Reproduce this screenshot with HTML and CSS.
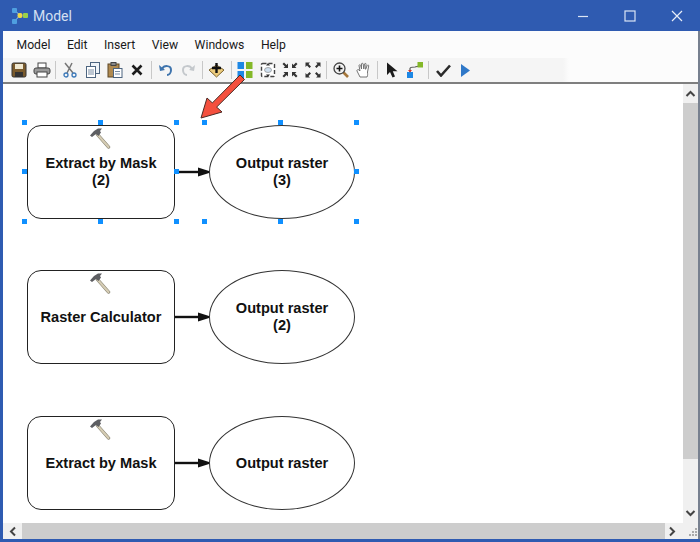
FILE: index.html
```html
<!DOCTYPE html>
<html lang="en">
<head>
  <meta charset="UTF-8" />
  <title>Model</title>
  <link rel="stylesheet" href="styles.css">
</head>
<body>
  <svg width="0" height="0" class="defs">
    <symbol id="hammer" viewBox="0 0 22 22">
      <path d="M8.5 7.5 L19.5 20" stroke="#85806f" stroke-width="3.4" stroke-linecap="round"/>
      <path d="M8.5 7.5 L19.5 20" stroke="#d5ccb4" stroke-width="2.2" stroke-linecap="round"/>
      <path d="M1 8.5 L5 4 L9 1.5 L13 1.5 L11 4 L12 5.5 L9.5 9 L7 7 L3 10 Z" fill="#5d5e62"/>
    </symbol>
    <symbol id="linkhead" viewBox="0 0 34 12">
      <path d="M0 6 H24" stroke="#111" stroke-width="2.4"/>
      <path d="M23 1.5 L34 5 V7 L23 10.5 Z" fill="#111"/>
    </symbol>
  </svg>

  <div class="window">
    <div class="titlebar">
      <svg class="app-icon" width="16" height="18" viewBox="0 0 16 18">
        <path d="M3 4 L8 8 M3 14 L8 8" stroke="#9cc3e6" stroke-width="1"/>
        <rect x="0" y="1" width="5" height="5" rx="1" fill="#4f9fe0"/>
        <rect x="0" y="12" width="5" height="5" rx="1" fill="#4f9fe0"/>
        <rect x="5.5" y="6" width="5" height="5" rx="2" fill="#f0d848"/>
        <rect x="11" y="6" width="5" height="5" rx="1" fill="#9bd04a"/>
      </svg>
      <span class="title">Model</span>
      <div class="win-buttons">
        <svg width="12" height="12" viewBox="0 0 12 12"><path d="M1 6.5 H11" stroke="#dbe5f5" stroke-width="1.2"/></svg>
        <svg width="12" height="12" viewBox="0 0 12 12"><rect x="1" y="1" width="10" height="10" fill="none" stroke="#dbe5f5" stroke-width="1.2"/></svg>
        <svg width="12" height="12" viewBox="0 0 12 12"><path d="M1 1 L11 11 M11 1 L1 11" stroke="#e8eef8" stroke-width="1.2"/></svg>
      </div>
    </div>

    <div class="menubar">
      <span>Model</span>
      <span>Edit</span>
      <span>Insert</span>
      <span>View</span>
      <span>Windows</span>
      <span>Help</span>
    </div>

    <div class="toolbar">
      <!-- save -->
      <div class="tool"><svg width="16" height="16" viewBox="0 0 16 16"><rect x="1" y="1" width="14" height="14" rx="1.5" fill="#7a5a2c" stroke="#333"/><rect x="4" y="2" width="8" height="5" fill="#f0e8d0"/><rect x="4" y="10" width="8" height="5" fill="#333"/></svg></div>
      <!-- print -->
      <div class="tool"><svg width="18" height="16" viewBox="0 0 18 16"><rect x="5" y="1" width="8" height="5" fill="#fff" stroke="#444"/><rect x="1" y="6" width="16" height="6" rx="2" fill="#9a9a9a" stroke="#444"/><rect x="4" y="10" width="10" height="5" fill="#fff" stroke="#444"/></svg></div>
      <div class="sep"></div>
      <!-- cut -->
      <div class="tool"><svg width="16" height="16" viewBox="0 0 16 16"><path d="M3 1 L11 11 M10 1 L5 11" stroke="#777" stroke-width="1.5"/><circle cx="4" cy="13" r="2" fill="none" stroke="#3b78b8" stroke-width="1.3"/><circle cx="12" cy="13" r="2" fill="none" stroke="#3b78b8" stroke-width="1.3"/></svg></div>
      <!-- copy -->
      <div class="tool"><svg width="16" height="16" viewBox="0 0 16 16"><rect x="5.5" y="0.5" width="9" height="11" fill="#eef3f8" stroke="#4d6580"/><rect x="1.5" y="4.5" width="9" height="11" fill="#fff" stroke="#4d6580"/><path d="M3 8 H9 M3 10 H9 M3 12 H9" stroke="#7a8ea5"/></svg></div>
      <!-- paste -->
      <div class="tool"><svg width="16" height="16" viewBox="0 0 16 16"><rect x="1" y="2" width="11" height="13" fill="#b08a50" stroke="#5d4726"/><rect x="4" y="0.5" width="5" height="3" fill="#888" stroke="#444"/><rect x="6.5" y="6.5" width="8.5" height="9" fill="#fff" stroke="#4d6580"/><path d="M8 9.5 H13 M8 12 H13" stroke="#7a8ea5"/></svg></div>
      <!-- delete -->
      <div class="tool"><svg width="12" height="12" viewBox="0 0 12 12"><path d="M1.5 1.5 L10.5 10.5 M10.5 1.5 L1.5 10.5" stroke="#1c1c1c" stroke-width="2.6"/></svg></div>
      <div class="sep"></div>
      <!-- undo -->
      <div class="tool"><svg width="14" height="14" viewBox="0 0 14 14"><path d="M3 6 C5 2 12 2 12 7 C12 10 10 12 8 12" fill="none" stroke="#3f74ad" stroke-width="2"/><path d="M0 2 L1 8 L6 7 Z" fill="#3f74ad"/></svg></div>
      <!-- redo -->
      <div class="tool"><svg width="14" height="14" viewBox="0 0 14 14"><path d="M11 6 C9 2 2 2 2 7 C2 10 4 12 6 12" fill="none" stroke="#c4c8cc" stroke-width="2"/><path d="M14 2 L13 8 L8 7 Z" fill="#c4c8cc"/></svg></div>
      <div class="sep"></div>
      <!-- add data -->
      <div class="tool"><svg width="17" height="16" viewBox="0 0 17 16"><path d="M1 8 L8.5 3 L16 8 L8.5 15 Z" fill="#eccb7c" stroke="#7a6230"/><path d="M8.5 1 V11 M4 6 H13" stroke="#111" stroke-width="2.4"/></svg></div>
      <div class="sep"></div>
      <!-- auto layout -->
      <div class="tool"><svg width="16" height="16" viewBox="0 0 16 16"><rect x="0.5" y="0" width="6.5" height="7" fill="#1e88e5"/><rect x="9" y="0" width="6.5" height="7" fill="#84b828"/><rect x="0.5" y="9" width="6.5" height="7" fill="#1e88e5"/><rect x="9" y="9" width="6.5" height="7" fill="#84b828"/></svg></div>
      <!-- full extent -->
      <div class="tool"><svg width="16" height="16" viewBox="0 0 16 16"><rect x="1.5" y="1.5" width="13" height="13" rx="1" fill="#fff" stroke="#444" stroke-width="1.4" stroke-dasharray="4 2"/><ellipse cx="8" cy="8" rx="3.5" ry="2.5" fill="#cfe0f0" stroke="#888" stroke-width="0.7"/><path d="M6 3.5 H10 L8 1 Z M6 12.5 H10 L8 15 Z" fill="#333"/></svg></div>
      <!-- fit to window -->
      <div class="tool"><svg width="16" height="16" viewBox="0 0 16 16" fill="#333"><path d="M6 6 H1.5 L3 4.5 L0.5 2 L2 0.5 L4.5 3 L6 1.5 Z M10 6 H14.5 L13 4.5 L15.5 2 L14 0.5 L11.5 3 L10 1.5 Z M6 10 H1.5 L3 11.5 L0.5 14 L2 15.5 L4.5 13 L6 14.5 Z M10 10 H14.5 L13 11.5 L15.5 14 L14 15.5 L11.5 13 L10 14.5 Z"/></svg></div>
      <div class="tool"><svg width="16" height="16" viewBox="0 0 16 16" fill="#333"><path d="M0.5 0.5 H5 L3.5 2 L6 4.5 L4.5 6 L2 3.5 L0.5 5 Z M15.5 0.5 H11 L12.5 2 L10 4.5 L11.5 6 L14 3.5 L15.5 5 Z M0.5 15.5 H5 L3.5 14 L6 11.5 L4.5 10 L2 12.5 L0.5 11 Z M15.5 15.5 H11 L12.5 14 L10 11.5 L11.5 10 L14 12.5 L15.5 11 Z"/></svg></div>
      <div class="sep"></div>
      <!-- zoom -->
      <div class="tool"><svg width="16" height="16" viewBox="0 0 16 16"><path d="M10 10 L15 15" stroke="#a5763a" stroke-width="2.6"/><circle cx="6.5" cy="6.5" r="5.5" fill="#f2f2f2" stroke="#444" stroke-width="1.3"/><path d="M6.5 3.5 V9.5 M3.5 6.5 H9.5" stroke="#111" stroke-width="1.6"/></svg></div>
      <!-- pan -->
      <div class="tool"><svg width="16" height="16" viewBox="0 0 16 16"><path d="M4 15 L1 9 C0.5 8 2 7 3 8 L4 9 L3 3.5 C3 2.5 4.5 2.5 4.7 3.5 L5.5 7 L5.5 2 C5.5 1 7 1 7.2 2 L7.8 7 L8.5 2 C8.7 1 10.2 1.2 10 2.3 L9.6 7.3 L11.2 3.5 C11.6 2.6 13 3 12.7 4 L11.5 10 C11.5 12 12 13 11 15 Z" fill="#fff" stroke="#666" stroke-width="0.9"/></svg></div>
      <div class="sep"></div>
      <!-- select -->
      <div class="tool"><svg width="12" height="16" viewBox="0 0 12 16"><path d="M1 0.5 V13 L4 10 L6.5 15.5 L9 14.5 L6.8 9.2 L11.5 9.2 Z" fill="#1c1c1c"/></svg></div>
      <!-- connect -->
      <div class="tool"><svg width="16" height="16" viewBox="0 0 16 16"><path d="M3 10 V6.5 C3 5 7 5 8 5 L12 4" fill="none" stroke="#555" stroke-width="1.2"/><rect x="10.5" y="0" width="5.5" height="5.5" fill="#84b828"/><rect x="0" y="10" width="6" height="6" fill="#1e88e5"/><path d="M1 8 H5 L3 10.5 Z" fill="#d83a2a"/></svg></div>
      <div class="sep"></div>
      <!-- validate -->
      <div class="tool"><svg width="15" height="13" viewBox="0 0 15 13"><path d="M1 7 L5 11.5 L14 1.5" fill="none" stroke="#2b2b2b" stroke-width="2.6"/></svg></div>
      <!-- run -->
      <div class="tool"><svg width="9" height="13" viewBox="0 0 9 13"><path d="M0 0 L9 6.5 L0 13 Z" fill="#2f78c8"/></svg></div>
    </div>

    <div class="workspace">
      <div class="canvas">
        <div class="node box row-one">
          <svg class="hammer" width="22" height="22"><use href="#hammer"/></svg>
          <span>Extract by Mask<br>(2)</span>
        </div>
        <svg class="link row-one" width="34" height="12"><use href="#linkhead"/></svg>
        <div class="node oval row-one"><span>Output raster<br>(3)</span></div>

        <div class="node box row-two">
          <svg class="hammer" width="22" height="22"><use href="#hammer"/></svg>
          <span>Raster Calculator</span>
        </div>
        <svg class="link row-two" width="34" height="12"><use href="#linkhead"/></svg>
        <div class="node oval row-two"><span>Output raster<br>(2)</span></div>

        <div class="node box row-three">
          <svg class="hammer" width="22" height="22"><use href="#hammer"/></svg>
          <span>Extract by Mask</span>
        </div>
        <svg class="link row-three" width="34" height="12"><use href="#linkhead"/></svg>
        <div class="node oval row-three"><span>Output raster</span></div>

        <!-- selection handles -->
        <i class="handle col-a top"></i><i class="handle col-b top"></i><i class="handle col-c top"></i>
        <i class="handle col-d top"></i><i class="handle col-e top"></i><i class="handle col-f top"></i>
        <i class="handle col-a mid"></i><i class="handle col-c mid"></i><i class="handle col-f mid"></i>
        <i class="handle col-a low"></i><i class="handle col-b low"></i><i class="handle col-c low"></i>
        <i class="handle col-d low"></i><i class="handle col-e low"></i><i class="handle col-f low"></i>
      </div>
      <div class="vscroll">
        <svg width="11" height="8" viewBox="0 0 11 8"><path d="M1.5 6 L5.5 2 L9.5 6" fill="none" stroke="#444" stroke-width="2"/></svg>
        <div class="vthumb"></div>
        <svg width="11" height="8" viewBox="0 0 11 8"><path d="M1.5 2 L5.5 6 L9.5 2" fill="none" stroke="#444" stroke-width="2"/></svg>
      </div>
      <div class="hscroll">
        <svg width="8" height="11" viewBox="0 0 8 11"><path d="M6 1.5 L2 5.5 L6 9.5" fill="none" stroke="#444" stroke-width="2"/></svg>
        <div class="hthumb"></div>
        <svg width="8" height="11" viewBox="0 0 8 11"><path d="M2 1.5 L6 5.5 L2 9.5" fill="none" stroke="#444" stroke-width="2"/></svg>
      </div>
      <svg class="grip" width="12" height="12" viewBox="0 0 12 12" fill="#aaa"><rect x="9" y="1" width="2" height="2"/><rect x="6" y="4" width="2" height="2"/><rect x="9" y="4" width="2" height="2"/><rect x="3" y="7" width="2" height="2"/><rect x="6" y="7" width="2" height="2"/><rect x="9" y="7" width="2" height="2"/></svg>
    </div>

    <!-- red callout drawn over the toolbar -->
    <svg class="callout" width="50" height="50" viewBox="0 0 50 50">
      <path d="M2 44 L8 24 L13.4 28.9 L41 1 L45.5 5.5 L17.6 33.1 L23 38 Z" fill="#f4503e" stroke="#4a2a24" stroke-width="1"/>
    </svg>
  </div>
</body>
</html>
```

FILE: styles.css
```css
* {
  box-sizing: border-box;
}

html, body {
  margin: 0;
  height: 100%;
}

body {
  background: #fff;
  overflow: hidden;
}

.defs {
  position: absolute;
}

.window {
  position: relative;
  width: 700px;
  height: 542px;
  display: flex;
  flex-direction: column;
  padding: 0 2px 3px 3px;
  background: linear-gradient(#77808f, #77808f) right 31px / 2px 508px no-repeat, #2f5bb1;
  font-family: Roboto, sans-serif;
  color: #1a1a1a;
}

.titlebar {
  height: 31px;
  flex: none;
  display: flex;
  align-items: center;
  padding-left: 9px;
  color: #d5e0f2;
  font-size: 14px;
}

.app-icon {
  margin-right: 5px;
}

.win-buttons {
  margin-left: auto;
  display: flex;
  gap: 35px;
  padding-right: 15px;
}

.menubar {
  height: 27px;
  flex: none;
  display: flex;
  align-items: center;
  gap: 16.5px;
  padding-left: 13.5px;
  background: #fcfcfc;
  font-size: 12.2px;
}

.toolbar {
  height: 26px;
  flex: none;
  display: flex;
  align-items: center;
  padding-left: 5px;
  background: linear-gradient(to right, #f5f5f5 0, #f5f5f5 560px, #fcfcfc 566px);
  border-bottom: 2px solid #7f7f7f;
}

.tool {
  width: 22.4px;
  display: flex;
  justify-content: center;
  align-items: center;
}

.sep {
  width: 6.2px;
  height: 18px;
  background: linear-gradient(#c8c8c8, #c8c8c8) center / 1px 100% no-repeat;
}

.workspace {
  flex: 1;
  display: grid;
  grid-template-columns: 1fr 15px;
  grid-template-rows: 1fr 16px;
  background: #f0f0f0;
  min-height: 0;
}

.canvas {
  position: relative;
  background: #fff;
  overflow: hidden;
}

/* diagram items, offsets are relative to .canvas */
.node {
  position: absolute;
  width: 148px;
  height: 94px;
  display: flex;
  align-items: center;
  justify-content: center;
  text-align: center;
  background: #fff;
  font-family: "Liberation Sans", Arial, sans-serif;
  font-weight: bold;
  font-size: 14.6px;
  line-height: 17px;
  color: #111;
}

.box {
  left: 24px;
  border: 1.5px solid #222;
  border-radius: 14px;
}

.oval {
  left: 206px;
  width: 146px;
  border: 1px solid #333;
  border-radius: 50%;
}

.row-one { top: 41px; }
.row-two { top: 186px; }
.row-three { top: 332px; }

.hammer {
  position: absolute;
  left: 61px;
  top: 1px;
}

/* arrows run from the box edge to the oval edge, at mid height */
.link {
  position: absolute;
  left: 172px;
  margin-top: 41px;
  z-index: 1;
}

.handle {
  position: absolute;
  width: 5px;
  height: 5px;
  background: #1090ff;
  z-index: 2;
}

.col-a { left: 19px; }
.col-b { left: 95px; }
.col-c { left: 171px; }
.col-d { left: 199px; }
.col-e { left: 275px; }
.col-f { left: 351px; }
.top { top: 36px; }
.mid { top: 85px; }
.low { top: 135px; }

.vscroll {
  display: flex;
  flex-direction: column;
  align-items: center;
  padding: 6px 0;
  gap: 5px;
}

.vthumb {
  flex: 1;
  width: 100%;
  margin-bottom: 45px;
  background: #cdcdcd;
}

.hscroll {
  display: flex;
  align-items: center;
  padding: 0 7px 0 6px;
  gap: 5px;
}

.hthumb {
  flex: 1;
  height: 100%;
  background: #cdcdcd;
  margin-right: -2px;
}

.grip {
  align-self: end;
  justify-self: end;
}

.callout {
  position: absolute;
  left: 199px;
  top: 74px;
}
```
